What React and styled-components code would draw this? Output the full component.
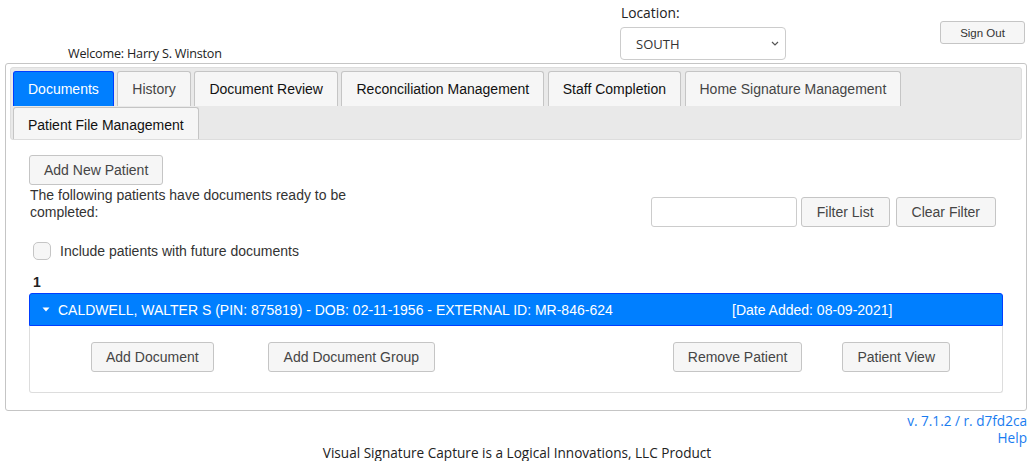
import React from "react";
import styled, { createGlobalStyle } from "styled-components";

const Global = createGlobalStyle`
  html, body { margin: 0; padding: 0; background: #fff; }
  body { font-family: "Liberation Sans", Arial, sans-serif; font-size: 14px; color: #333; }
  * { box-sizing: border-box; }
`;

const humanist = `"Open Sans", "DejaVu Sans", sans-serif`;

const Page = styled.div`
  width: 1022px;
  margin-left: 5px;
`;

const Header = styled.header`
  display: flex;
  height: 63px;
`;

const Welcome = styled.div`
  align-self: flex-end;
  margin-left: 63px;
  margin-bottom: 1px;
  font-family: ${humanist};
  font-size: 12.6px;
  letter-spacing: -0.2px;
  color: #222;
`;

const LocationBlock = styled.div`
  margin-left: auto;
  display: flex;
  flex-direction: column;
  padding-top: 4px;
  gap: 5px;
`;

const Label = styled.label`
  font-family: ${humanist};
  font-size: 13.8px;
  color: #222;
  line-height: 18px;
  padding-left: 1px;
`;

const SelectWrap = styled.div`
  position: relative;
  width: 166px;
  height: 33px;
`;

const Select = styled.select`
  appearance: none;
  width: 100%;
  height: 100%;
  border: 1px solid #ccc;
  border-radius: 4px;
  background: #fff;
  padding: 0 0 0 15px;
  font-family: ${humanist};
  font-size: 13px;
  color: #333;
  outline: none;
`;

const Chevron = styled.svg`
  position: absolute;
  right: 7px;
  top: 14px;
  pointer-events: none;
`;

const SignOut = styled.button`
  align-self: flex-start;
  margin-top: 21px;
  margin-left: 154px;
  margin-right: 2px;
  width: 85px;
  height: 23px;
  border: 1px solid #c5c5c5;
  border-radius: 3px;
  background: #f6f6f6;
  font-family: "Liberation Sans", Arial, sans-serif;
  font-size: 11.5px;
  color: #333;
  padding: 0;
`;

const Panel = styled.section`
  border: 1px solid #c5c5c5;
  border-radius: 3px;
  padding: 3px 4px 0;
`;

const TabBar = styled.nav`
  display: flex;
  flex-wrap: wrap;
  row-gap: 1px;
  background: #e9e9e9;
  border: 1px solid #ddd;
  border-radius: 3px;
  padding: 3px 0 0 2px;
  height: 73px;
  overflow: hidden;
`;

const Tab = styled.div`
  height: 35px;
  margin-right: 3.5px;
  padding: 0 14px;
  display: flex;
  align-items: center;
  font-size: 14px;
  border: 1px solid ${(p) => (p.$active ? "#003eff" : "#c5c5c5")};
  border-bottom: none;
  border-radius: 3px 3px 0 0;
  background: ${(p) => (p.$active ? "#007fff" : "#f6f6f6")};
  color: ${(p) => (p.$active ? "#fff" : p.$muted ? "#454545" : "#111")};
`;

const Content = styled.div`
  padding: 15px 19px 17px;
`;

const TopRow = styled.div`
  display: flex;
  justify-content: space-between;
`;

const LeftCol = styled.div`
  display: flex;
  flex-direction: column;
  align-items: flex-start;
`;

const Button = styled.button`
  height: 30px;
  padding: 0 ${(p) => p.$px || 14}px;
  border: 1px solid #c5c5c5;
  border-radius: 3px;
  background: #f6f6f6;
  font-family: "Liberation Sans", Arial, sans-serif;
  font-size: 14px;
  color: #454545;
`;

const Intro = styled.p`
  margin: 2px 0 0 1px;
  max-width: 340px;
  line-height: 17px;
  font-size: 14px;
  color: #333;
`;

const FilterBar = styled.div`
  display: flex;
  align-items: center;
  margin-top: 42px;
  margin-right: 7px;
  gap: 4px;
  align-self: flex-start;
`;

const FilterInput = styled.input`
  width: 146px;
  height: 30px;
  border: 1px solid #ccc;
  border-radius: 3px;
`;

const ClearBtn = styled(Button)`
  margin-left: 2px;
`;

const CheckRow = styled.label`
  display: flex;
  align-items: center;
  gap: 9px;
  margin: 15px 0 0 4px;
  font-size: 14px;
  color: #333;
`;

const Box = styled.span`
  width: 18px;
  height: 18px;
  border: 1px solid #c5c5c5;
  border-radius: 5px;
  background: #f6f6f6;
`;

const Count = styled.div`
  margin: 14px 0 0 4px;
  font-weight: bold;
  font-size: 14px;
  color: #222;
  line-height: 17px;
`;

const AccHeader = styled.div`
  margin-top: 2px;
  height: 33px;
  display: flex;
  align-items: center;
  background: #007fff;
  border: 1px solid #003eff;
  border-radius: 3px 3px 0 0;
  color: #fff;
  font-size: 14px;
  padding-left: 12px;
`;

const Caret = styled.svg`
  margin-right: 8px;
`;

const Name = styled.span`
  flex: 0 0 674px;
`;

const AccBody = styled.div`
  display: flex;
  align-items: center;
  border: 1px solid #ddd;
  border-top: none;
  border-radius: 0 0 3px 3px;
  padding: 16px 52px 20px 61px;
`;

const Group = styled.div`
  display: flex;
  gap: ${(p) => p.$gap}px;
  margin-left: ${(p) => (p.$right ? "auto" : "0")};
`;

const Meta = styled.div`
  text-align: right;
  font-family: ${humanist};
  font-size: 13.6px;
  line-height: 17px;
  color: #1a7cf0;
  margin-top: 1px;
`;

const Footer = styled.footer`
  text-align: center;
  font-family: ${humanist};
  font-size: 13.6px;
  line-height: 17px;
  color: #222;
  margin-top: -2px;
`;

export default function App() {
  const tabs = [
    { t: "Documents", active: true },
    { t: "History", muted: true },
    { t: "Document Review" },
    { t: "Reconciliation Management" },
    { t: "Staff Completion" },
    { t: "Home Signature Management", muted: true },
    { t: "Patient File Management" },
  ];
  return (
    <>
      <Global />
      <Page>
        <Header>
          <Welcome>Welcome: Harry S. Winston</Welcome>
          <LocationBlock>
            <Label>Location:</Label>
            <SelectWrap>
              <Select defaultValue="SOUTH">
                <option>SOUTH</option>
                <option>NORTH</option>
              </Select>
              <Chevron width="8" height="5" viewBox="0 0 8 5">
                <path d="M1 1l3 3 3-3" fill="none" stroke="#555" strokeWidth="1.2" />
              </Chevron>
            </SelectWrap>
          </LocationBlock>
          <SignOut>Sign Out</SignOut>
        </Header>

        <Panel>
          <TabBar>
            {tabs.map((x) => (
              <Tab key={x.t} $active={x.active} $muted={x.muted}>
                {x.t}
              </Tab>
            ))}
          </TabBar>
          <Content>
            <TopRow>
              <LeftCol>
                <Button>Add New Patient</Button>
                <Intro>The following patients have documents ready to be completed:</Intro>
              </LeftCol>
              <FilterBar>
                <FilterInput />
                <Button $px={15}>Filter List</Button>
                <ClearBtn $px={15}>Clear Filter</ClearBtn>
              </FilterBar>
            </TopRow>
            <CheckRow>
              <Box />
              Include patients with future documents
            </CheckRow>
            <Count>1</Count>
            <AccHeader>
              <Caret width="8" height="5" viewBox="0 0 8 5">
                <path d="M0.5 0.5h7L4 4.5z" fill="#fff" />
              </Caret>
              <Name>CALDWELL, WALTER S (PIN: 875819) - DOB: 02-11-1956 - EXTERNAL ID: MR-846-624</Name>
              <span>[Date Added: 08-09-2021]</span>
            </AccHeader>
            <AccBody>
              <Group $gap={54}>
                <Button>Add Document</Button>
                <Button $px={15}>Add Document Group</Button>
              </Group>
              <Group $gap={40} $right>
                <Button>Remove Patient</Button>
                <Button>Patient View</Button>
              </Group>
            </AccBody>
          </Content>
        </Panel>
        <Meta>
          <div>v. 7.1.2 / r. d7fd2ca</div>
          <div>Help</div>
        </Meta>
      </Page>
      <Footer>Visual Signature Capture is a Logical Innovations, LLC Product</Footer>
    </>
  );
}
